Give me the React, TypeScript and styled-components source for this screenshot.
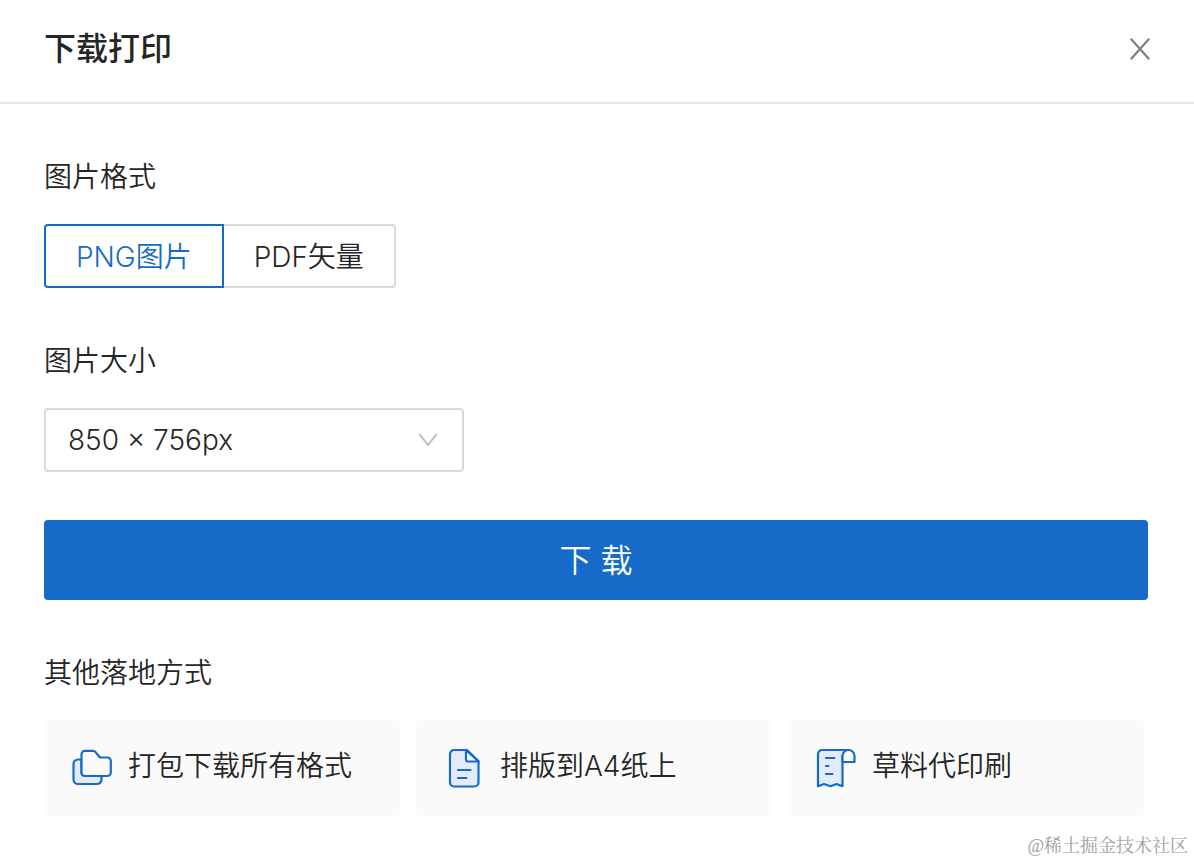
import React, { useState } from "react";
import styled, { createGlobalStyle } from "styled-components";

const BLUE = "#176bc8";
const TEXT = "#262626";
const BORDER = "#d9d9d9";

const GlobalStyle = createGlobalStyle`
  *, *::before, *::after { box-sizing: border-box; }
  body {
    margin: 0;
    background: #fff;
    color: ${TEXT};
    font-family: Inter, "Noto Sans CJK SC", sans-serif;
    font-size: 28px;
    font-weight: 350;
    line-height: 40px;
  }
  button, select, input { font: inherit; color: inherit; }
`;

const Dialog = styled.section`
  position: relative;
  min-height: 100vh;
`;

const Header = styled.header`
  display: flex;
  align-items: center;
  justify-content: space-between;
  height: 104px;
  padding: 0 40px 4px 44px;
  border-bottom: 2px solid #e6e6e6;
`;

const Title = styled.h1`
  margin: 0;
  font-size: 32px;
  line-height: 48px;
  font-weight: 500;
`;

const CloseButton = styled.button`
  display: flex;
  padding: 0;
  border: 0;
  background: none;
  color: #808080;
  cursor: pointer;
`;

const Body = styled.form`
  display: flex;
  flex-direction: column;
  gap: 48px;
  padding: 48px 46px 44px 44px;
`;

const Field = styled.div`
  display: flex;
  flex-direction: column;
  align-items: flex-start;
  gap: 22px;
`;

const Label = styled.label`
  line-height: 50px;
`;

const Group = styled.fieldset`
  min-width: 0;
  margin: 0;
  padding: 0;
  border: 0;
`;

const Legend = styled.legend`
  margin-bottom: 22px;
  padding: 0;
  line-height: 50px;
`;

const Segments = styled.div`
  display: flex;
`;

const Segment = styled.label<{ $selected: boolean; $side: "left" | "right" }>`
  padding: 11px 30px 9px;
  border: 2px solid ${(p) => (p.$selected ? BLUE : BORDER)};
  border-${(p) => (p.$side === "left" ? "right" : "left")}-width: ${(p) => (p.$selected ? 2 : 0)}px;
  border-radius: ${(p) => (p.$side === "left" ? "4px 0 0 4px" : "0 4px 4px 0")};
  color: ${(p) => (p.$selected ? BLUE : TEXT)};
  cursor: pointer;
`;

const HiddenRadio = styled.input`
  position: absolute;
  appearance: none;
  width: 0;
  height: 0;
  margin: 0;
  opacity: 0;
`;

const SelectBox = styled.div`
  display: grid;
  align-items: center;
  width: 420px;
  max-width: 100%;

  & > * { grid-area: 1 / 1; }
  & > svg { justify-self: end; margin-right: 26px; pointer-events: none; }
`;

const Select = styled.select`
  width: 100%;
  height: 64px;
  padding: 0 56px 0 22px;
  appearance: none;
  border: 2px solid ${BORDER};
  border-radius: 4px;
  background: #fff;
`;

const DownloadButton = styled.button`
  height: 80px;
  padding: 2px 0 0;
  border: 0;
  border-radius: 4px;
  background: ${BLUE};
  color: #fff;
  font-size: 32px;
  cursor: pointer;
`;

const Options = styled.section`
  display: flex;
  flex-direction: column;
  gap: 22px;
`;

const Subtitle = styled.h2`
  margin: 0;
  font-size: 28px;
  line-height: 50px;
  font-weight: inherit;
`;

const Cards = styled.div`
  display: grid;
  grid-template-columns: repeat(3, 1fr);
  gap: 16px;
  padding-right: 4px;
`;

const Card = styled.button`
  display: flex;
  align-items: center;
  gap: 16px;
  height: 96px;
  padding: 0 28px;
  border: 0;
  border-radius: 4px;
  background: #fafafa;
  text-align: left;
  white-space: nowrap;
  cursor: pointer;
`;

const CardLabel = styled.span`
  padding-bottom: 4px;
`;

const Watermark = styled.span`
  position: absolute;
  right: 6px;
  bottom: 4px;
  color: #a0a0a0;
  font-family: "Liberation Serif", "Noto Serif CJK SC", "Noto Sans CJK SC", serif;
  font-size: 18px;
  line-height: 24px;
  font-weight: 400;
`;

const iconProps = {
  width: 40,
  height: 40,
  viewBox: "0 0 40 40",
  fill: "none",
  stroke: BLUE,
  strokeWidth: 2.2,
  strokeLinecap: "round" as const,
  strokeLinejoin: "round" as const,
  "aria-hidden": true,
};

const FoldersIcon = () => (
  <svg {...iconProps}>
    <path
      d="M9.500 11.500H6A4.500 4.500 0 0 0 1.500 16V31.500A4.500 4.500 0 0 0 6 36h19a4.500 4.500 0 0 0 4.500-4.500V28H13A3.500 3.500 0 0 1 9.500 24.500z"
      fill="#e3ebf8"
    />
    <path
      d="M13 2.800h8a3 3 0 0 1 2.300 1.100l4.700 5.600H35.300a3.500 3.500 0 0 1 3.500 3.500V24.500a3.500 3.500 0 0 1-3.500 3.500H13A3.500 3.500 0 0 1 9.500 24.500V6.300A3.500 3.500 0 0 1 13 2.800z"
      fill="#fafafa"
    />
  </svg>
);

const DocumentIcon = () => (
  <svg {...iconProps}>
    <path
      d="M10 2H23L34.500 13v21.500a4 4 0 0 1-4 4H10a4 4 0 0 1-4-4V6A4 4 0 0 1 10 2z"
      fill="#e3ebf8"
    />
    <path d="M22 2V11.500a2 2 0 0 0 2 2H34.500z" fill="#fafafa" />
    <path d="M14 22h12.500M14 30h8.500" />
  </svg>
);

const ReceiptIcon = () => (
  <svg {...iconProps}>
    <path
      d="M33 2H6A4 4 0 0 0 2 6V38.200L8 36l6.500 2.200L20.500 36l6 2.200V8z"
      fill="#e3ebf8"
    />
    <path d="M26.500 14V8a6 6 0 0 1 12 0V14z" fill="#fafafa" />
    <path d="M10 10h8.500M10 18h2.500M10 26h6.500" />
  </svg>
);

const formats = [
  { id: "png", label: "PNG图片", side: "left" as const },
  { id: "pdf", label: "PDF矢量", side: "right" as const },
];

const options = [
  { label: "打包下载所有格式", icon: <FoldersIcon /> },
  { label: "排版到A4纸上", icon: <DocumentIcon /> },
  { label: "草料代印刷", icon: <ReceiptIcon /> },
];

export default function App() {
  const [format, setFormat] = useState("png");

  return (
    <>
      <GlobalStyle />
      <Dialog role="dialog" aria-labelledby="dialog-title">
        <Header>
          <Title id="dialog-title">下载打印</Title>
          <CloseButton type="button" aria-label="关闭">
            <svg width="28" height="28" viewBox="0 0 28 28" fill="none" stroke="currentColor" strokeWidth="2.200">
              <path d="M4.800 3.800 23.200 24.200M23.200 3.800 4.800 24.200" />
            </svg>
          </CloseButton>
        </Header>
        <Body onSubmit={(e) => e.preventDefault()}>
          <Group>
            <Legend>图片格式</Legend>
            <Segments>
              {formats.map((f) => (
                <Segment key={f.id} $selected={format === f.id} $side={f.side}>
                  <HiddenRadio
                    type="radio"
                    name="format"
                    value={f.id}
                    checked={format === f.id}
                    onChange={() => setFormat(f.id)}
                  />
                  {f.label}
                </Segment>
              ))}
            </Segments>
          </Group>
          <Field>
            <Label htmlFor="size">图片大小</Label>
            <SelectBox>
              <Select id="size">
                <option>850 × 756px</option>
              </Select>
              <svg width="20" height="14" viewBox="0 0 20 14" fill="none" stroke="#bfbfbf" strokeWidth="2">
                <path d="M1.500 1 10 12.200 18.500 1" />
              </svg>
            </SelectBox>
          </Field>
          <DownloadButton type="submit">下 载</DownloadButton>
          <Options>
            <Subtitle>其他落地方式</Subtitle>
            <Cards>
              {options.map((o) => (
                <Card key={o.label} type="button">
                  {o.icon}
                  <CardLabel>{o.label}</CardLabel>
                </Card>
              ))}
            </Cards>
          </Options>
        </Body>
        <Watermark>@稀土掘金技术社区</Watermark>
      </Dialog>
    </>
  );
}
